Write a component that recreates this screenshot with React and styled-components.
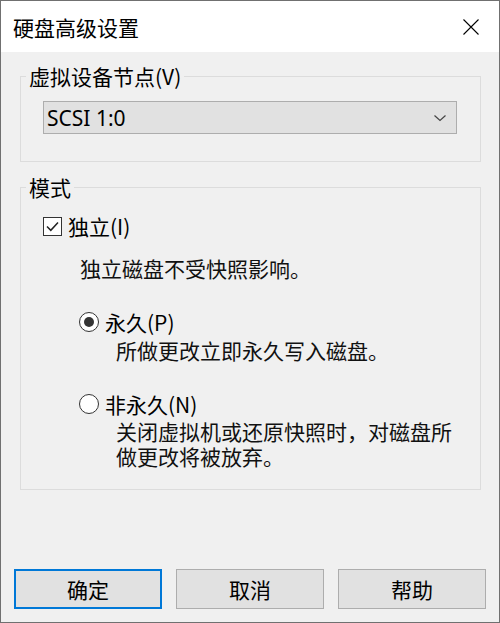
import React from "react";
import styled, { createGlobalStyle } from "styled-components";

const Global = createGlobalStyle`
  html, body { margin: 0; padding: 0; background: #f0f0f0; }
  body { font-family: "Noto Sans CJK SC", "Noto Sans", sans-serif; color: #000; }
  * { box-sizing: border-box; }
`;

const Window = styled.div`
  width: 500px;
  height: 623px;
  border: 1px solid #707070;
  background: #f0f0f0;
  display: flex;
  flex-direction: column;
`;

const TitleBar = styled.div`
  height: 51px;
  background: #fff;
  display: flex;
  align-items: center;
  justify-content: space-between;
  padding: 0 20px 0 12px;
  flex-shrink: 0;
`;

const Title = styled.span`
  font-size: 21px;
  line-height: 24px;
  margin-top: 1px;
`;

const CloseIcon = styled.svg`
  width: 16px;
  height: 16px;
  display: block;
`;

const Body = styled.div`
  padding: 12px 18px 0 19px;
  display: flex;
  flex-direction: column;
  flex: 1;
`;

const Group = styled.fieldset`
  margin: ${(p) => p.$mt || 0}px 0 0 0;
  border: 1px solid #dcdcdc;
  padding: ${(p) => p.$pad};
  min-width: 0;
`;

const Legend = styled.legend`
  font-size: 21px;
  line-height: 24px;
  padding: 0 3px;
  margin-left: -17px;
  color: #000;
`;

const Combo = styled.div`
  height: 33px;
  background: #e1e1e1;
  border: 1px solid #adadad;
  display: flex;
  align-items: center;
  justify-content: space-between;
  padding: 0 10px 0 3px;
  font-family: "Noto Sans", "Noto Sans CJK SC", sans-serif;
  font-size: 21px;
`;

const ComboText = styled.span`
  line-height: 24px;
`;

const Chevron = styled.svg`
  width: 12px;
  height: 8px;
  display: block;
`;

const OptionRow = styled.div`
  display: flex;
  align-items: center;
  height: 24px;
  margin: ${(p) => p.$mt || 0}px 0 0 ${(p) => p.$indent || 0}px;
  gap: 6px;
`;

const CheckBox = styled.span`
  width: 19px;
  height: 19px;
  border: 1px solid #333;
  background: #fff;
  display: flex;
  align-items: center;
  justify-content: center;
`;

const Radio = styled.span`
  width: 20px;
  height: 20px;
  border-radius: 50%;
  border: 1px solid #333;
  background: #fff;
  display: flex;
  align-items: center;
  justify-content: center;
  &::after {
    content: "";
    width: 10px;
    height: 10px;
    border-radius: 50%;
    background: ${(p) => (p.$on ? "#333" : "transparent")};
  }
`;

const Label = styled.span`
  font-size: 21px;
  line-height: 24px;
`;

const Desc = styled.p`
  margin: ${(p) => p.$mt || 0}px 0 0 ${(p) => p.$indent || 0}px;
  font-size: 21px;
  line-height: ${(p) => p.$lh || 24}px;
  width: ${(p) => (p.$w ? `${p.$w}px` : "auto")};
  color: #111;
`;

const Buttons = styled.div`
  margin-top: auto;
  display: flex;
  gap: 14px;
  padding: 0 12px 13px 13px;
  margin-left: -19px;
  margin-right: -18px;
`;

const Button = styled.button`
  width: 148px;
  height: 40px;
  background: #e1e1e1;
  border: ${(p) => (p.$primary ? "2px solid #0078d7" : "1px solid #adadad")};
  font-family: "Noto Sans CJK SC", sans-serif;
  font-size: 21px;
  line-height: 24px;
  color: #000;
  padding: 0;
  display: flex;
  align-items: center;
  justify-content: center;
`;

export default function App() {
  return (
    <>
      <Global />
      <Window>
        <TitleBar>
          <Title>硬盘高级设置</Title>
          <CloseIcon viewBox="0 0 16 16">
            <path d="M0.5 0.5 L15.5 15.5 M15.5 0.5 L0.5 15.5" stroke="#000" strokeWidth="1.1" fill="none" />
          </CloseIcon>
        </TitleBar>
        <Body>
          <Group $pad="13px 23px 27px 22px">
            <Legend>虚拟设备节点(V)</Legend>
            <Combo>
              <ComboText>SCSI 1:0</ComboText>
              <Chevron viewBox="0 0 12 8">
                <path d="M0.5 1.5 L6 6.5 L11.5 1.5" stroke="#444" strokeWidth="1.2" fill="none" />
              </Chevron>
            </Combo>
          </Group>
          <Group $mt={13} $pad="15px 20px 20px 22px">
            <Legend>模式</Legend>
            <OptionRow>
              <CheckBox>
                <svg width="13" height="11" viewBox="0 0 13 11">
                  <path d="M1 5.5 L4.8 9.3 L12 1.5" stroke="#222" strokeWidth="1.5" fill="none" />
                </svg>
              </CheckBox>
              <Label>独立(I)</Label>
            </OptionRow>
            <Desc $mt={18} $indent={37}>独立磁盘不受快照影响。</Desc>
            <OptionRow $mt={30} $indent={36}>
              <Radio $on />
              <Label>永久(P)</Label>
            </OptionRow>
            <Desc $mt={4} $indent={73}>所做更改立即永久写入磁盘。</Desc>
            <OptionRow $mt={30} $indent={36}>
              <Radio />
              <Label>非永久(N)</Label>
            </OptionRow>
            <Desc $mt={3} $indent={73} $lh={25} $w={345}>
              关闭虚拟机或还原快照时，对磁盘所做更改将被放弃。
            </Desc>
          </Group>
          <Buttons>
            <Button $primary>确定</Button>
            <Button>取消</Button>
            <Button>帮助</Button>
          </Buttons>
        </Body>
      </Window>
    </>
  );
}
